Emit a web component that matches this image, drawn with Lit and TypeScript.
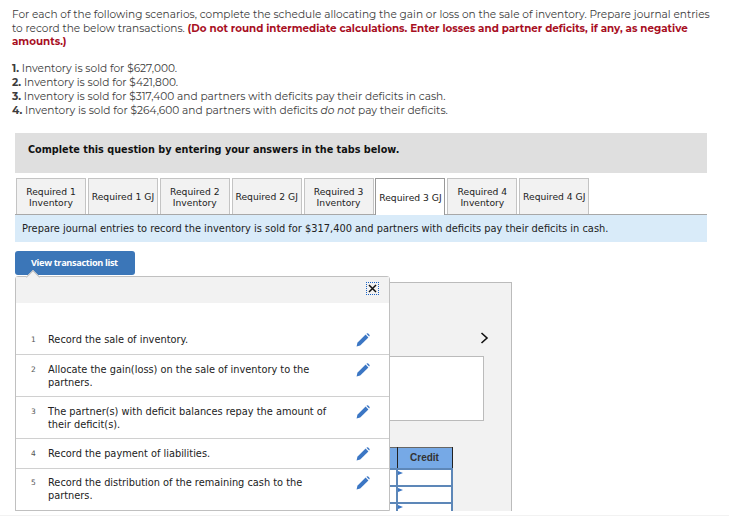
import { LitElement, html, css, svg } from "lit";
import { customElement } from "lit/decorators.js";

const TABS: [string, string | null, boolean][] = [
  ["Required 1", "Inventory", false],
  ["Required 1 GJ", null, false],
  ["Required 2", "Inventory", false],
  ["Required 2 GJ", null, false],
  ["Required 3", "Inventory", false],
  ["Required 3 GJ", null, true],
  ["Required 4", "Inventory", false],
  ["Required 4 GJ", null, false],
];

const ROWS: [string, string, string][] = [
  ["1", "Record the sale of inventory.", "r1"],
  ["2", "Allocate the gain(loss) on the sale of inventory to the partners.", "r2"],
  ["3", "The partner(s) with deficit balances repay the amount of their deficit(s).", "r3"],
  ["4", "Record the payment of liabilities.", "r4"],
  ["5", "Record the distribution of the remaining cash to the partners.", "r5"],
];

const pencil = svg`<svg class="pencil" width="14" height="14" viewBox="0 0 14 14"><path d="M0.6 13.4 L1.4 9.8 L9.6 1.6 L12.4 4.4 L4.2 12.6 Z" fill="#3b76c4"/><path d="M10.4 0.8 L11 0.4 Q11.6 0.1 12.2 0.6 L13.4 1.8 Q13.9 2.4 13.5 3 L13.1 3.6 Z" fill="#3b76c4"/></svg>`;

@customElement("app-root")
export class AppRoot extends LitElement {
  static styles = css`
    :host { display: block; height: 516px; overflow: hidden; background: #fff; color: #3c3c3c; font-family: "Montserrat", "Open Sans", "Noto Sans", sans-serif; position: relative; }
    .intro { padding: 8px 12px 0 12px; font-size: 10.55px; line-height: 13.6px; height: 52px; box-sizing: border-box; margin-bottom: 10px; }
    .warn { color: #a80f1f; font-weight: 700; font-size: 10.32px; }
    .items { padding-left: 12px; font-size: 10.6px; line-height: 14px; height: 56px; margin-bottom: 15px; box-sizing:border-box; }
    .items b { font-weight: 700; }
    .band { margin: 0 22px 0 15px; height: 40px; background: #dfdfdf; display: flex; align-items: center; padding: 0 0 8px 13px; box-sizing: border-box; font: 700 9.7px "DejaVu Sans", Verdana, sans-serif; color: #111; }
    .tabs { display: flex; gap: 1.9px; margin: 5px 22px 0 16px; height: 36px; }
    .tab { flex: 0 0 70px; box-sizing: border-box; height: 36px; border: 1px solid #c4c4c4; border-bottom: 0; background: #f2f2f2; display: flex; align-items: center; justify-content: center; text-align: center; font: 9.2px/11px "DejaVu Sans", Verdana, sans-serif; color: #222; white-space: nowrap; }
    .tab.on { background: #fff; border-color: #999; height: 37px; position: relative; z-index: 1; }
    .desc { margin: 0 22px 0 15px; border-top: 1px solid #a8a8a8; background: #d9ebf9; display: flex; align-items: center; padding-left: 7px; font: 9.85px "DejaVu Sans", Verdana, sans-serif; color: #222; box-sizing: border-box; height: 28px; }
    .btn { margin: 9px 0 0 15px; width: 120px; height: 24px; background: #3b76b8; border-radius: 3px; color: #fff; font: 700 9.2px/24px "Open Sans", sans-serif; padding-left: 16px; box-sizing: border-box; letter-spacing: -0.35px; }
    .stage { position: relative; margin-left: 15px; display: flow-root; }
    .panel { margin-top: 7px; width: 497px; height: 229px; overflow: hidden; box-sizing: border-box; background: #f2f2f2; border: 1px solid #bbb; border-bottom: 0; padding-top: 49px; }
    .chev { display: flex; justify-content: flex-end; padding-right: 22px; height: 24px; }
    .chev svg { display: block; }
    .whitebox { margin-left: auto; margin-right: 27px; width: 200px; height: 65px; background: #fff; border: 1px solid #bbb; box-sizing: border-box; }
    .tablewrap { display: flex; justify-content: flex-end; margin-top: 26px; padding-right: 58px; }
    table.grid { border-collapse: collapse; width: 112px; table-layout: fixed; }
    .grid th { background: #76a9e6; border: 1px solid #222; border-top-color: #666; height: 18px; padding: 0 0 2px; font: 700 10px "Liberation Sans", Arial, sans-serif; color: #333; }
    .grid td { height: 15px; padding: 0; border: 2px solid #5d87b8; background: #fff; position: relative; }
    .grid td::before { content: ""; position: absolute; left: 0; top: 1px; border-left: 5px solid #3b76c4; border-top: 2.5px solid transparent; border-bottom: 2.5px solid transparent; }
    .pop { position: absolute; left: 0; top: 1px; width: 375px; height: 235px; box-sizing: border-box; background: #fff; border: 1px solid #c0c0c0; border-top-right-radius: 3px; border-top-left-radius: 3px; font: 9.8px/13px "DejaVu Sans", Verdana, sans-serif; color: #222; }
    .pop::before { content: ""; position: absolute; left: 12px; top: -5px; width: 9px; height: 9px; background: #f2f2f2; border-left: 1px solid #c0c0c0; border-top: 1px solid #c0c0c0; transform: rotate(45deg); }
    .pophead { height: 26px; background: #f2f2f2; display: flex; justify-content: flex-end; align-items: flex-start; padding: 5px 10px 0 0; box-sizing: border-box; }
    .close { width: 13px; height: 13px; border: 1px dotted #1a62c4; box-sizing: border-box; display: flex; align-items: center; justify-content: center; }
    .row { display: grid; grid-template-columns: 32px 1fr 50px; box-sizing: border-box; border-bottom: 1px solid #d0d0d0; }
    .row:last-child { border-bottom: 0; }
    .num { font-size: 7.5px; color: #555; padding-left: 15px; line-height: 13px; }
    .txt { max-width: 282px; }
    .pw { padding-left: 17px; }
    .r1 { height: 52px; padding-top: 30px; }
    .r2 { height: 42px; padding-top: 8px; }
    .r3 { height: 42px; padding-top: 8px; }
    .r4 { height: 30px; padding-top: 8px; }
    .r5 { height: 41px; padding-top: 7px; }
    .foot { position: absolute; left: 0; right: 0; bottom: 0; height: 1px; background: #f2f2f2; }
  `;

  render() {
    return html`
      <div class="intro">For each of the following scenarios, complete the schedule allocating the gain or loss on the sale of inventory. Prepare journal entries to record the below transactions. <span class="warn">(Do not round intermediate calculations. Enter losses and partner deficits, if any, as negative amounts.)</span></div>
      <div class="items">
        <div><b>1.</b> Inventory is sold for $627,000.</div>
        <div><b>2.</b> Inventory is sold for $421,800.</div>
        <div><b>3.</b> Inventory is sold for $317,400 and partners with deficits pay their deficits in cash.</div>
        <div><b>4.</b> Inventory is sold for $264,600 and partners with deficits <i>do not</i> pay their deficits.</div>
      </div>
      <div class="band">Complete this question by entering your answers in the tabs below.</div>
      <div class="tabs">
        ${TABS.map(([a, b, on]) => html`<div class="tab ${on ? "on" : ""}"><span>${a}${b ? html`<br />${b}` : ""}</span></div>`)}
      </div>
      <div class="desc">Prepare journal entries to record the inventory is sold for $317,400 and partners with deficits pay their deficits in cash.</div>
      <div class="btn">View transaction list</div>
      <div class="stage">
        <div class="panel">
          <div class="chev"><svg width="9" height="12" viewBox="0 0 9 12"><path d="M1.5 1 L7 6 L1.5 11" fill="none" stroke="#111" stroke-width="1.6"/></svg></div>
          <div class="whitebox"></div>
          <div class="tablewrap">
            <table class="grid">
              <tr><th></th><th>Credit</th></tr>
              <tr><td></td><td></td></tr><tr><td></td><td></td></tr><tr><td></td><td></td></tr>
            </table>
          </div>
        </div>
        <div class="pop">
          <div class="pophead"><div class="close"><svg width="9" height="9" viewBox="0 0 9 9"><path d="M1 1 L8 8 M8 1 L1 8" stroke="#111" stroke-width="1.5"/></svg></div></div>
          ${ROWS.map(([n, t, c]) => html`<div class="row ${c}"><div class="num">${n}</div><div class="txt">${t}</div><div class="pw">${pencil}</div></div>`)}
        </div>
      </div>
      <div class="foot"></div>
    `;
  }
}
